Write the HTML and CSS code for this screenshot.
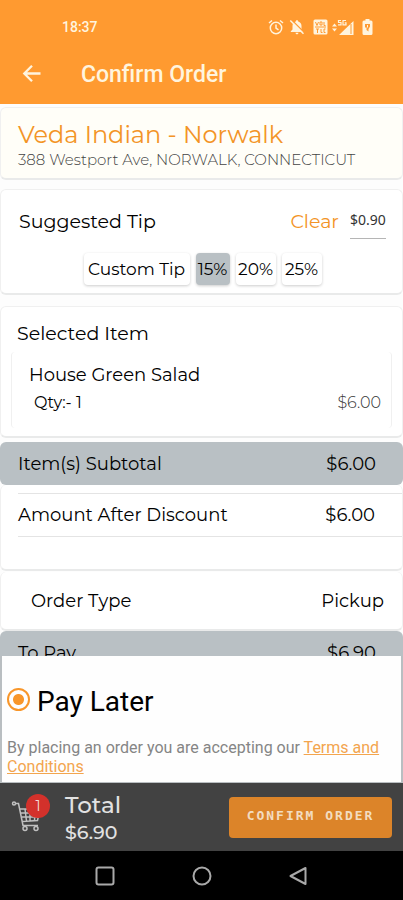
FILE: index.html
```html
<!DOCTYPE html>
<html lang="en">
<head>
<meta charset="utf-8">
<meta name="viewport" content="width=device-width, initial-scale=1">
<title>Confirm Order</title>
<link rel="stylesheet" href="styles.css">
</head>
<body>
<div class="app">
  <header class="header">
    <div class="status">
      <span class="clock">18:37</span>
      <svg class="icon-alarm" width="16" height="16" viewBox="0 0 16 16" fill="none" stroke="#fff4de" stroke-width="1.5"><circle cx="8" cy="9" r="5.7"/><path d="M8 5.5V9l2.5 1.8M1 4l3-2.5M15 4l-3-2.5"/></svg>
      <svg class="icon-bell" width="16" height="16" viewBox="0 0 16 16"><path fill="#fff4de" d="M8 1.2c.8 0 1.2.5 1.200 1.200C11.500 3 12.500 5 12.500 7v3.500l1.700 1.700v.8H1.800v-.8l1.700-1.700V7c0-2 1-4 3.300-4.600 0-.7.4-1.200 1.200-1.200zM6.500 13.700h3c0 .9-.6 1.500-1.500 1.500s-1.500-.6-1.500-1.500z"/><path stroke="#ff9a30" stroke-width="1.300" d="M2.500 .8l13 13"/><path stroke="#fff4de" stroke-width="1.500" d="M1.300 1.500l13.200 13.200"/></svg>
      <svg class="icon-volte" width="15" height="16" viewBox="0 0 15 16"><rect x=".5" y=".5" width="14" height="15" rx="1.500" fill="#fff4de"/><path fill="none" stroke="#ff9a30" stroke-width="1" d="M2.500 3l1.500 3.500L5.500 3M7 3h2v3H7zM11 3v3.500h1.500M2 8h11M3 10h3M4.500 10v4M8 10v3.500h1.500M12.500 10H11v3.500h1.500"/></svg>
      <svg class="icon-signal" width="24" height="17" viewBox="0 0 24 17"><g fill="#fff4de"><path d="M1 7.500l2.500-3 2.500 3zM1 9.500l2.500 3 2.500-3zM8 16L22.500 2v14z"/></g><path d="M20 5v10" stroke="#ff9a30" stroke-width="1"/><path fill="none" stroke="#fff4de" stroke-width="1.200" d="M10 1.500H7.500v2H10v2.300H7M15 1.500h-3v4.300h3v-2h-1.300"/></svg>
      <svg class="icon-battery" width="11" height="16" viewBox="0 0 11 16"><path fill="#fff4de" d="M3.500 0h4v1.500H9A1.500 1.500 0 0 1 10.500 3v11.500A1.500 1.500 0 0 1 9 16H2A1.500 1.500 0 0 1 .5 14.500V3A1.500 1.500 0 0 1 2 1.500h1.500z"/><path fill="#ff9a30" d="M3 5h5v2.500L6.500 10v2.500L4.500 11V8.500H3z"/><path fill="#fff4de" d="M5 6h1v2.500H5z"/></svg>
    </div>
    <div class="toolbar">
      <button class="back" aria-label="Back"><svg width="20" height="20" viewBox="0 0 20 20" fill="none" stroke="#fff4de" stroke-width="2.300"><path d="M18.500 9.500H2.500M10 1.800L2.300 9.500l7.700 7.700"/></svg></button>
      <h1>Confirm Order</h1>
    </div>
  </header>

  <main class="content">
    <section class="card restaurant">
      <h2>Veda Indian - Norwalk</h2>
      <p>388 Westport Ave, NORWALK, CONNECTICUT</p>
    </section>

    <section class="card tip">
      <div class="tip-top">
        <label for="tip">Suggested Tip</label>
        <button class="clear">Clear</button>
        <input id="tip" type="text" value="$0.90">
      </div>
      <div class="tip-options">
        <button>Custom Tip</button>
        <button class="selected">15%</button>
        <button>20%</button>
        <button>25%</button>
      </div>
    </section>

    <section class="card items">
      <h3>Selected Item</h3>
      <div class="item">
        <h4>House Green Salad</h4>
        <div class="row item-detail"><span>Qty:- 1</span><span class="price">$6.00</span></div>
      </div>
    </section>

    <div class="row bar"><span>Item(s) Subtotal</span><span>$6.00</span></div>

    <section class="card discount">
      <div class="row discount-row"><span>Amount After Discount</span><span>$6.00</span></div>
    </section>

    <section class="card row order-type"><span>Order Type</span><span>Pickup</span></section>

    <div class="row bar"><span>To Pay</span><span>$6.90</span></div>
  </main>

  <section class="payment">
    <label class="pay-option"><input type="radio" name="pay" checked>Pay Later</label>
    <p>By placing an order you are accepting our <a href="#terms">Terms and Conditions</a></p>
  </section>

  <footer class="checkout">
    <div class="cart">
      <svg width="32" height="32" viewBox="0 0 32 32" fill="none" stroke="#c0c0c0" stroke-width="1.500"><circle cx="3" cy="2.500" r="1.500"/><path d="M4.500 2.500h3l4.500 22H27M8.700 8H29l-2.500 11.500-15.500 1M10 12h18M11 16h16.500M14 8l1.500 12M19 8v12M24 8l-.5 12"/><circle cx="14" cy="27.500" r="2"/><circle cx="25" cy="27.500" r="2"/></svg>
      <span class="badge">1</span>
    </div>
    <div class="total"><span class="total-label">Total</span><span class="total-value">$6.90</span></div>
    <button class="confirm">CONFIRM ORDER</button>
  </footer>

  <nav class="system">
    <button aria-label="Recent apps"><svg width="20" height="20" viewBox="0 0 20 20" fill="none" stroke="#a9a9a9" stroke-width="2"><rect x="1.500" y="1.500" width="17" height="17" rx="2"/></svg></button>
    <button aria-label="Home"><svg width="20" height="20" viewBox="0 0 20 20" fill="none" stroke="#a9a9a9" stroke-width="2"><circle cx="10" cy="10" r="8.500"/></svg></button>
    <button aria-label="Back"><svg width="20" height="20" viewBox="0 0 20 20" fill="none" stroke="#a9a9a9" stroke-width="2" stroke-linejoin="round"><path d="M16.500 2v16L1.500 10z"/></svg></button>
  </nav>
</div>
</body>
</html>
```
FILE: styles.css
```css
* { box-sizing: border-box; }
body { margin: 0; font-family: Montserrat, Inter, sans-serif; color: #000; background: #fdfdfd; }
h1, h2, h3, h4, p { margin: 0; font-weight: 400; }
button { border: 0; padding: 0; background: none; font: inherit; color: inherit; }
svg { display: block; }

.app { display: flex; flex-direction: column; height: 100vh; }

.header { flex: none; height: 104px; background: #ff9a30; color: #fff4de; font-family: Roboto, sans-serif; font-weight: 500; }
.status { display: flex; align-items: center; height: 52px; padding: 2px 30px 0 62px; }
.clock { margin-right: auto; font-size: 14px; }
.icon-bell { margin-left: 5px; }
.icon-volte { margin-left: 8px; }
.icon-signal { margin-left: 3px; }
.icon-battery { margin-left: 7px; }
.toolbar { display: flex; align-items: center; height: 44px; padding-left: 22px; }
.back { width: 20px; margin-right: 39px; }
.toolbar h1 { font-size: 23px; font-weight: 500; }

.content { flex: 1; min-height: 0; overflow-y: auto; scrollbar-width: none; display: flex; flex-direction: column; padding-top: 3px; font-size: 18px; line-height: 24px; }
.content > * { flex: none; }
.card { background: #fff; border: 1px solid #f0f0f0; border-bottom: 2px solid #e9eaea; border-radius: 6px; }
.row { display: flex; justify-content: space-between; align-items: center; }

.restaurant { height: 73px; padding: 12px 17px 0; background: #fffef8; }
.restaurant h2 { font-size: 24px; line-height: 30px; color: #f39426; }
.restaurant p { font-size: 15px; line-height: 20px; font-weight: 300; color: #444; }

.tip { height: 106px; margin-top: 9px; padding: 15px 16px 0 18px; }
.tip-top { display: flex; align-items: center; height: 34px; }
.tip-top label { margin-right: auto; font-size: 19px; }
.clear { color: #f39426; font-size: 19px; margin-right: 11px; }
#tip { width: 36px; height: 34px; border: 0; border-bottom: 1px solid #b5b5b5; border-radius: 0; background: none; padding: 0 0 4px; font: 14px "Noto Sans", sans-serif; color: #333; text-align: center; }
.tip-options { display: flex; justify-content: center; gap: 6px; margin-top: 14px; }
.tip-options button { height: 32px; padding: 0 2px; min-width: 40px; border-radius: 4px; background: #fff; box-shadow: 0 1px 3px rgba(0, 0, 0, 0.2); font-size: 17px; white-space: nowrap; }
.tip-options button:first-child { min-width: 106px; }
.tip-options .selected { min-width: 34px; background: #b9c0c4; padding: 0; }

.items { height: 132px; margin-top: 11px; padding: 15px 10px 0; }
.items h3 { padding-left: 6px; font-size: 19px; }
.item { height: 76px; margin-top: 6px; padding: 11px 10px 0 17px; border: solid #f0f0f0; border-width: 0 1px; border-radius: 4px; }
.item h4 { font-size: 18px; }
.item-detail { height: 32px; padding-left: 5px; font-size: 16px; }
.price { font-weight: 300; color: #333; }

.bar { height: 43px; margin-top: 4px; padding: 0 27px 0 18px; border-radius: 6px; background: #b9c0c4; }
.discount { height: 86px; padding: 8px 0 0 17px; border-top: 0; }
.discount-row { height: 44px; padding-right: 27px; border: solid #e4e4e4; border-width: 1px 0; }
.order-type { height: 59px; margin-top: 1px; padding: 0 18px 0 30px; border-top: 0; }
.order-type + .bar { margin-top: 0; }

.payment { flex: none; height: 127px; padding: 25px 5px 0; border: solid #b9bec1; border-width: 0 2px 1px; background: #fefefe; font-family: Roboto, sans-serif; }
.pay-option { display: flex; align-items: center; height: 40px; font-size: 28px; }
.pay-option input { appearance: none; width: 23px; height: 23px; margin: 0 7px 3px 0; border: 2px solid #f8962a; border-radius: 50%; background: radial-gradient(circle, #f8962a 5px, transparent 6px); }
.payment p { margin-top: 17px; font-size: 16px; line-height: 19px; color: #858585; }
.payment a { color: #f3a54e; }

.checkout { flex: none; display: flex; align-items: center; height: 68px; padding: 0 11px; background: #424242; color: #e2e2e2; }
.cart { position: relative; width: 54px; height: 32px; }
.badge { position: absolute; left: 15px; top: -7px; width: 24px; height: 24px; border-radius: 50%; background: #d3312b; color: #f4dada; font-size: 14px; line-height: 24px; text-align: center; }
.total { display: flex; flex-direction: column; margin-right: auto; padding-top: 2px; }
.total-label { font-size: 23px; line-height: 30px; font-weight: 500; }
.total-value { font-size: 19px; line-height: 26px; font-weight: 500; }
.confirm { width: 163px; height: 41px; padding-bottom: 4px; border-radius: 4px; background: #dc8429; color: #f3dcc0; font: 700 13px "DejaVu Sans Mono", monospace; letter-spacing: 2px; white-space: nowrap; }

.system { flex: none; display: flex; align-items: center; justify-content: center; gap: 77px; height: 49px; background: #000; }
```
